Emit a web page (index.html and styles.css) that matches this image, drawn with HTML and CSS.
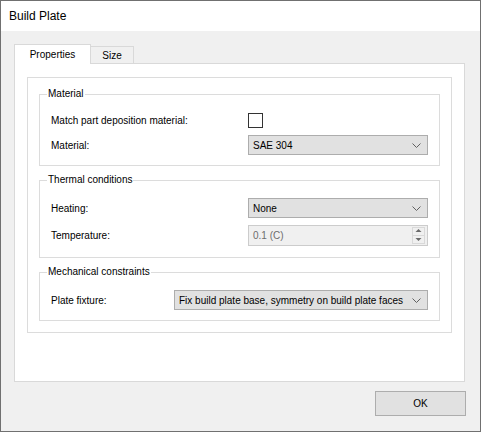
FILE: index.html
```html
<!DOCTYPE html>
<html lang="en">
<head>
  <meta charset="UTF-8">
  <meta name="viewport" content="width=device-width, initial-scale=1.0">
  <title>Build Plate</title>
  <link rel="stylesheet" href="styles.css">
</head>
<body>
  <div class="dialog">
    <div class="title-bar">Build Plate</div>

    <div class="dialog-body">
      <div class="tab-strip">
        <div class="tab tab-active">Properties</div>
        <div class="tab">Size</div>
      </div>

      <div class="tab-page">
        <div class="page-frame">
          <fieldset class="group group-material">
            <legend>Material</legend>
            <div class="field-grid">
              <label class="field-label">Match part deposition material:</label>
              <span class="checkbox"></span>
              <label class="field-label">Material:</label>
              <div class="combo">
                <span>SAE 304</span>
                <svg class="combo-arrow" width="9" height="5" viewBox="0 0 9 5"><polyline points="0.5,0.5 4.5,4.5 8.5,0.5" fill="none" stroke="#606060" stroke-width="1"/></svg>
              </div>
            </div>
          </fieldset>

          <fieldset class="group group-thermal">
            <legend>Thermal conditions</legend>
            <div class="field-grid">
              <label class="field-label">Heating:</label>
              <div class="combo">
                <span>None</span>
                <svg class="combo-arrow" width="9" height="5" viewBox="0 0 9 5"><polyline points="0.5,0.5 4.5,4.5 8.5,0.5" fill="none" stroke="#606060" stroke-width="1"/></svg>
              </div>
              <label class="field-label">Temperature:</label>
              <div class="spin spin-disabled">
                <span>0.1 (C)</span>
                <svg class="spin-buttons" width="13" height="17" viewBox="0 0 13 17">
                  <rect x="0.5" y="0.5" width="12" height="16" fill="#f0f0f0" stroke="#d9d9d9"/>
                  <line x1="0" y1="8.5" x2="13" y2="8.5" stroke="#d9d9d9"/>
                  <polygon points="3.5,5 9.5,5 6.5,2" fill="#6a6a6a"/>
                  <polygon points="3.5,11 9.5,11 6.5,14" fill="#6a6a6a"/>
                </svg>
              </div>
            </div>
          </fieldset>

          <fieldset class="group group-mechanical">
            <legend>Mechanical constraints</legend>
            <div class="field-grid">
              <label class="field-label">Plate fixture:</label>
              <div class="combo">
                <span>Fix build plate base, symmetry on build plate faces</span>
                <svg class="combo-arrow" width="9" height="5" viewBox="0 0 9 5"><polyline points="0.5,0.5 4.5,4.5 8.5,0.5" fill="none" stroke="#606060" stroke-width="1"/></svg>
              </div>
            </div>
          </fieldset>
        </div>
      </div>

      <div class="dialog-footer">
        <button class="btn">OK</button>
      </div>
    </div>
  </div>
</body>
</html>
```

FILE: styles.css
```css
/* Windows dialog palette */
:root {
  --window-border: #707070;
  --window-bg: #f0f0f0;
  --page-bg: #ffffff;
  --page-border: #d9d9d9;
  --group-border: #dcdcdc;
  --control-bg: #e1e1e1;
  --control-border: #adadad;
  --disabled-border: #cccccc;
  --disabled-text: #6d6d6d;
  --text: #000000;

  --font-ui: "Liberation Sans", Arial, sans-serif;
}

* {
  margin: 0;
  padding: 0;
  box-sizing: border-box;
}

body {
  font-family: var(--font-ui);
  font-size: 10px;
  color: var(--text);
  background: var(--window-bg);
}

.dialog {
  width: 481px;
  height: 432px;
  border: 1px solid var(--window-border);
  background: var(--window-bg);
}

.title-bar {
  height: 30px;
  line-height: 30px;
  padding-left: 8px;
  background: #fff;
  font-size: 12px;
}

.dialog-body {
  padding: 13px 15px 0 13px;
}

/* Tabs */
.tab-strip {
  display: flex;
  align-items: flex-end;
  height: 19px;
}

.tab {
  display: flex;
  align-items: center;
  justify-content: center;
  width: 43px;
  height: 17px;
  background: var(--window-bg);
  border: 1px solid var(--page-border);
  border-left: none;
  border-bottom: none;
}

.tab-active {
  position: relative;
  z-index: 1;
  width: 77px;
  height: 20px;
  margin-bottom: -1px;
  padding-bottom: 1px;
  background: var(--page-bg);
  border-left: 1px solid var(--page-border);
}

.tab-page {
  height: 319px;
  padding: 13px 12px;
  background: var(--page-bg);
  border: 1px solid var(--page-border);
}

.page-frame {
  padding: 9px 11px 11px;
  border: 1px solid var(--group-border);
}

/* Group boxes */
.group {
  min-width: 0;
  margin-bottom: 7px;
  padding: 0 11px 10px;
  border: 1px solid var(--group-border);
}

.group:last-child {
  margin-bottom: 0;
}

.group legend {
  height: 14px;
  line-height: 14px;
  margin-left: -4px;
  padding: 0 1px;
}

.field-grid {
  display: grid;
  grid-template-columns: 197px 180px;
  align-items: center;
}

.group-material .field-grid {
  padding-top: 9px;
  grid-template-rows: 20px 20px;
  row-gap: 5px;
}

.group-thermal {
  padding-bottom: 11px;
}

.group-thermal .field-grid {
  padding-top: 11px;
  grid-template-rows: 20px 21px;
  row-gap: 7px;
}

.group-mechanical .field-grid {
  padding-top: 11px;
  grid-template-columns: 123px 254px;
  grid-template-rows: 20px;
}

.checkbox {
  width: 15px;
  height: 15px;
  background: #fff;
  border: 1px solid #333;
}

/* Combo box and spinner */
.combo,
.spin {
  display: flex;
  align-items: center;
  justify-content: space-between;
  height: 100%;
  padding: 0 6px 0 4px;
  background: var(--control-bg);
  border: 1px solid var(--control-border);
  white-space: nowrap;
}

.spin-disabled {
  padding-right: 2px;
  background: var(--window-bg);
  border-color: var(--disabled-border);
  color: var(--disabled-text);
}

.combo-arrow,
.spin-buttons {
  display: block;
  flex-shrink: 0;
}

/* Footer */
.dialog-footer {
  display: flex;
  justify-content: flex-end;
  margin-top: 9px;
  margin-right: -1px;
}

.btn {
  width: 91px;
  height: 25px;
  font-family: var(--font-ui);
  font-size: 10px;
  color: var(--text);
  background: var(--control-bg);
  border: 1px solid var(--control-border);
}
```
